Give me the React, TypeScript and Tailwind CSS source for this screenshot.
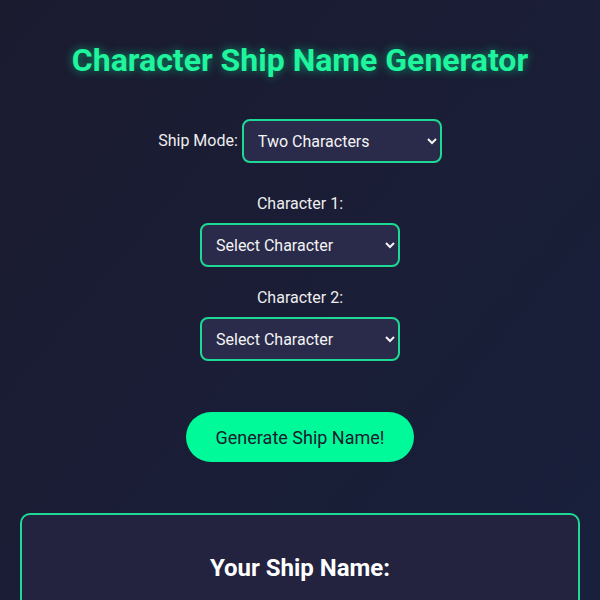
import { useState } from 'react'

// Character ship name generator page
export default function App() {
    const [mode, setMode] = useState('two')
    const [char1, setChar1] = useState('')
    const [char2, setChar2] = useState('')

    const selectClass =
        'h-[44px] w-[200px] rounded-lg border-2 border-[#1ed994] bg-[#2a2a4a] pl-[10px] pr-2 text-[16px] text-[#f4f4f4] outline-none'

    return (
        <div className="min-h-screen bg-gradient-to-br from-[#1b1b30] to-[#18203c] px-5 pt-10 pb-10 font-['Roboto',sans-serif] text-[#eeeeee]">
            <h1 className="text-center text-[32px] leading-[40px] font-bold text-[#1ef59d] [text-shadow:0_0_10px_rgba(0,250,154,0.55)]">
                Character Ship Name Generator
            </h1>

            {/* Mode */}
            <div className="mt-[39px] flex items-center justify-center gap-1">
                <label className="text-[16px]">Ship Mode:</label>
                <select className={selectClass} value={mode} onChange={(e) => setMode(e.target.value)}>
                    <option value="two">Two Characters</option>
                    <option value="three">Three Characters</option>
                </select>
            </div>

            {/* Character 1 */}
            <div className="mt-[31px] flex flex-col items-center">
                <label className="mb-[9px] text-[16px] leading-[20px]">Character 1:</label>
                <select className={selectClass} value={char1} onChange={(e) => setChar1(e.target.value)}>
                    <option value="">Select Character</option>
                </select>
            </div>

            {/* Character 2 */}
            <div className="mt-[21px] flex flex-col items-center">
                <label className="mb-[9px] text-[16px] leading-[20px]">Character 2:</label>
                <select className={selectClass} value={char2} onChange={(e) => setChar2(e.target.value)}>
                    <option value="">Select Character</option>
                </select>
            </div>

            <div className="mt-[51px] flex justify-center">
                <button className="h-[50px] rounded-full bg-[#00fa9a] px-[30px] text-[18px] text-[#1a1a2e]">
                    Generate Ship Name!
                </button>
            </div>

            {/* Result */}
            <div className="mt-[51px] rounded-[10px] border-2 border-[#1ed994] bg-[#23233f] px-5 pt-[38px] pb-10 text-center">
                <h2 className="text-[24px] leading-[30px] font-bold text-white">Your Ship Name:</h2>
                <p className="mt-4 text-[28px] text-[#1ef59d]">&nbsp;</p>
            </div>
        </div>
    )
}
